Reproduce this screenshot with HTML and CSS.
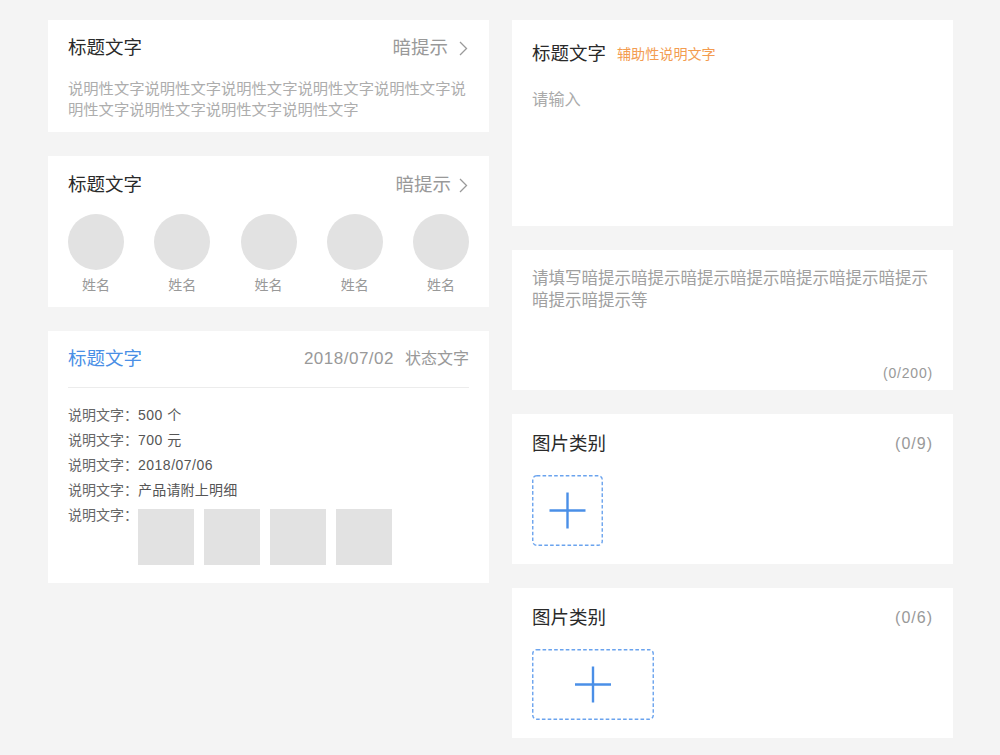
FILE: index.html
```html
<!DOCTYPE html>
<html lang="zh-CN">
<head>
<meta charset="utf-8">
<title>Cards</title>
<link rel="stylesheet" href="styles.css">
</head>
<body>
<div class="page">
  <div class="col">
    <section class="card card-intro">
      <div class="head">
        <h2 class="title">标题文字</h2>
        <span class="hint">暗提示<svg class="chev" width="9" height="15" viewBox="0 0 9 15"><polyline points="1,1 7.5,7.5 1,14" fill="none" stroke="#9a9a9a" stroke-width="1.3"/></svg></span>
      </div>
      <p class="desc">说明性文字说明性文字说明性文字说明性文字说明性文字说明性文字说明性文字说明性文字说明性文字</p>
    </section>

    <section class="card card-people">
      <div class="head">
        <h2 class="title">标题文字</h2>
        <span class="hint hint-tight">暗提示<svg class="chev" width="9" height="15" viewBox="0 0 9 15"><polyline points="1,1 7.5,7.5 1,14" fill="none" stroke="#9a9a9a" stroke-width="1.3"/></svg></span>
      </div>
      <ul class="people">
        <li class="person"><span class="avatar"></span><span class="name">姓名</span></li>
        <li class="person"><span class="avatar"></span><span class="name">姓名</span></li>
        <li class="person"><span class="avatar"></span><span class="name">姓名</span></li>
        <li class="person"><span class="avatar"></span><span class="name">姓名</span></li>
        <li class="person"><span class="avatar"></span><span class="name">姓名</span></li>
      </ul>
    </section>

    <section class="card card-detail">
      <div class="head head-line">
        <h2 class="title title-blue">标题文字</h2>
        <span class="meta"><span class="date">2018/07/02</span><span class="status">状态文字</span></span>
      </div>
      <div class="rows">
        <div class="row"><span class="label">说明文字：</span><span class="value">500 个</span></div>
        <div class="row"><span class="label">说明文字：</span><span class="value">700 元</span></div>
        <div class="row"><span class="label">说明文字：</span><span class="value">2018/07/06</span></div>
        <div class="row"><span class="label">说明文字：</span><span class="value value-cjk">产品请附上明细</span></div>
        <div class="row"><span class="label">说明文字：</span>
          <span class="thumbs"><span class="thumb"></span><span class="thumb"></span><span class="thumb"></span><span class="thumb"></span></span>
        </div>
      </div>
    </section>
  </div>

  <div class="col">
    <section class="card card-input">
      <div class="head head-left">
        <h2 class="title">标题文字</h2>
        <span class="aux">辅助性说明文字</span>
      </div>
      <div class="placeholder">请输入</div>
    </section>

    <section class="card card-textarea">
      <div class="textarea">请填写暗提示暗提示暗提示暗提示暗提示暗提示暗提示暗提示暗提示等</div>
      <div class="counter">(0/200)</div>
    </section>

    <section class="card card-upload">
      <div class="head">
        <h2 class="title">图片类别</h2>
        <span class="count">(0/9)</span>
      </div>
      <div class="uploader">
        <svg class="add" width="71" height="71" viewBox="0 0 71 71">
          <rect x="0.75" y="0.75" width="69.5" height="69.5" rx="4" ry="4" fill="none" stroke="#6aa3ee" stroke-width="1.4" stroke-dasharray="3.6 2.2"/>
          <line x1="17.5" y1="35.5" x2="53.5" y2="35.5" stroke="#4a8fe7" stroke-width="2.4"/>
          <line x1="35.5" y1="17.5" x2="35.5" y2="53.5" stroke="#4a8fe7" stroke-width="2.4"/>
        </svg>
      </div>
    </section>

    <section class="card card-upload">
      <div class="head">
        <h2 class="title">图片类别</h2>
        <span class="count">(0/6)</span>
      </div>
      <div class="uploader">
        <svg class="add" width="122" height="71" viewBox="0 0 122 71">
          <rect x="0.75" y="0.75" width="120.5" height="69.5" rx="4" ry="4" fill="none" stroke="#6aa3ee" stroke-width="1.4" stroke-dasharray="3.6 2.2"/>
          <line x1="43" y1="35.5" x2="79" y2="35.5" stroke="#4a8fe7" stroke-width="2.4"/>
          <line x1="61" y1="17.5" x2="61" y2="53.5" stroke="#4a8fe7" stroke-width="2.4"/>
        </svg>
      </div>
    </section>
  </div>
</div>
</body>
</html>
```

FILE: styles.css
```css
* { box-sizing: border-box; }

html, body {
  margin: 0;
  padding: 0;
  background: #f4f4f4;
}

body {
  font-family: "Liberation Sans", "Noto Sans CJK SC", sans-serif;
  color: #333;
  width: 1000px;
  height: 755px;
  overflow: hidden;
}

.page {
  display: flex;
  align-items: flex-start;
  gap: 23px;
  padding: 20px 0 0 48px;
}

.col {
  width: 441px;
  display: flex;
  flex-direction: column;
  gap: 24px;
}

.card {
  background: #fff;
  padding-left: 20px;
  padding-right: 20px;
}

.head {
  display: flex;
  align-items: center;
  justify-content: space-between;
  height: 24px;
}

.title {
  margin: 0;
  font-weight: normal;
  font-size: 18.5px;
  line-height: 24px;
  color: #2a2a2a;
}

.title-blue { color: #4a8fe6; }

.hint {
  display: flex;
  align-items: center;
  font-size: 18.5px;
  line-height: 24px;
  color: #999;
}

.chev { margin-left: 11px; margin-right: 1px; }
.hint-tight .chev { margin-left: 8px; }

/* card 1 */
.card-intro { padding-top: 16px; padding-bottom: 12px; }

.desc {
  margin: 18px 0 0;
  font-size: 15.3px;
  line-height: 21px;
  color: #adadad;
}

/* card 2 */
.card-people { padding-top: 17px; padding-bottom: 12px; }

.people {
  list-style: none;
  margin: 17px 0 0;
  padding: 0;
  display: flex;
  justify-content: space-between;
}

.person {
  display: flex;
  flex-direction: column;
  align-items: center;
  width: 56px;
}

.avatar {
  width: 56px;
  height: 56px;
  border-radius: 50%;
  background: #e2e2e2;
}

.name {
  margin-top: 5px;
  font-size: 14px;
  line-height: 20px;
  color: #999;
}

/* card 3 */
.card-detail { padding-top: 16px; padding-bottom: 18px; }

.head-line {
  height: auto;
  padding-bottom: 16px;
  border-bottom: 1px solid #ececec;
}

.meta {
  display: flex;
  align-items: center;
  gap: 11px;
  color: #999;
  line-height: 24px;
}

.date { font-size: 17px; letter-spacing: 0.5px; }
.status { font-size: 16px; }

.rows { padding-top: 15px; }

.row {
  display: flex;
  align-items: flex-start;
  font-size: 14px;
  line-height: 25px;
  color: #666;
}

.label { flex: none; white-space: nowrap; }

.value { letter-spacing: 0.5px; color: #555; white-space: nowrap; }
.value-cjk { letter-spacing: 0.2px; }

.thumbs {
  display: flex;
  gap: 10px;
  margin-top: 6px;
}

.thumb {
  width: 56px;
  height: 56px;
  background: #e2e2e2;
}

/* right column */
.card-input { padding-top: 22px; }

.head-left { justify-content: flex-start; }

.aux {
  margin-left: 11px;
  font-size: 14.1px;
  line-height: 24px;
  color: #f39c50;
}

.placeholder {
  margin-top: 21px;
  min-height: 139px;
  font-size: 16.3px;
  line-height: 24px;
  color: #aaa;
}

.card-textarea { padding-top: 17px; padding-bottom: 7px; }

.textarea {
  min-height: 96px;
  font-size: 16.5px;
  line-height: 22px;
  color: #a0a0a0;
}

.counter {
  text-align: right;
  font-size: 14px;
  letter-spacing: 0.8px;
  line-height: 20px;
  color: #999;
}

.card-upload { padding-top: 18px; padding-bottom: 18px; }

.count {
  font-size: 16px;
  letter-spacing: 1px;
  line-height: 24px;
  color: #999;
}

.uploader {
  margin-top: 19px;
  height: 71px;
  display: flex;
}

.add { display: block; }
```
